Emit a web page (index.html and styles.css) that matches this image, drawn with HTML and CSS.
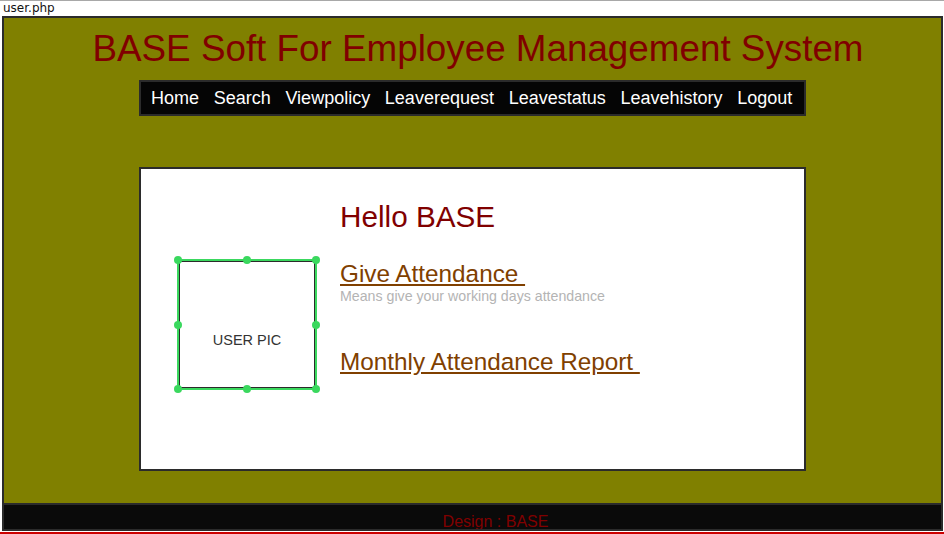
FILE: index.html
```html
<!DOCTYPE html>
<html>
<head>
<meta charset="utf-8">
<title>user.php</title>
<link rel="stylesheet" href="styles.css">
</head>
<body>
<div class="topstrip">user.php</div>
<div class="frame">
  <div class="main">
    <h1 class="title">BASE Soft For Employee Management System</h1>
    <nav class="nav">
      <a href="#">Home</a>
      <a href="#">Search</a>
      <a href="#">Viewpolicy</a>
      <a href="#">Leaverequest</a>
      <a href="#">Leavestatus</a>
      <a href="#">Leavehistory</a>
      <a href="#">Logout</a>
    </nav>
    <section class="card">
      <div class="pic">
        <span class="pic-label">USER PIC</span>
        <i class="h h-tl"></i><i class="h h-tm"></i><i class="h h-tr"></i>
        <i class="h h-ml"></i><i class="h h-mr"></i>
        <i class="h h-bl"></i><i class="h h-bm"></i><i class="h h-br"></i>
      </div>
      <div class="info">
        <h2 class="hello">Hello BASE</h2>
        <a class="biglink" href="#">Give Attendance&nbsp;</a>
        <p class="desc">Means give your working days attendance</p>
        <a class="biglink second" href="#">Monthly Attendance Report&nbsp;</a>
      </div>
    </section>
  </div>
  <footer class="footer">Design : BASE</footer>
</div>
<div class="redline"></div>
</body>
</html>
```
FILE: styles.css
```css
html, body {
  margin: 0;
  padding: 0;
  background: #ffffff;
  overflow: hidden;
}
body {
  width: 944px;
  height: 534px;
  font-family: "Liberation Sans", Arial, sans-serif;
}
.topstrip {
  height: 15px;
  border-top: 1px solid #a8a8a8;
  font-family: "DejaVu Sans", sans-serif;
  font-size: 12px;
  line-height: 14px;
  padding-left: 3px;
  color: #111;
}
.frame {
  margin-left: 2px;
  width: 937px;
  border: 2px solid #2b2b2b;
}
.main {
  background: #808000;
  height: 485px;
  border-bottom: 2px solid #2b2b2b;
  display: flex;
  flex-direction: column;
  align-items: center;
}
.title {
  margin: 0;
  padding: 12px 0 0 11px;
  height: 37px;
  font-weight: normal;
  font-size: 36.8px;
  line-height: 37px;
  color: #800000;
  white-space: nowrap;
}
.nav {
  margin-top: 13px;
  height: 32px;
  background: #050505;
  border: 2px solid #2b2b2b;
  display: flex;
  gap: 14.7px;
  padding-left: 10px;
  box-sizing: content-box;
  width: 653px;
}
.nav a {
  color: #ffffff;
  text-decoration: none;
  font-size: 18px;
  line-height: 32px;
}
.card {
  margin-top: 51px;
  width: 663px;
  height: 300px;
  background: #ffffff;
  border: 2px solid #2b2b2b;
  display: flex;
  align-items: flex-start;
}
.pic {
  position: relative;
  margin: 90px 0 0 36px;
  width: 136px;
  height: 127px;
  border: 2px solid #3ad85e;
  box-shadow: inset 0 0 0 1px #2b2b2b;
  display: flex;
  align-items: flex-end;
  justify-content: center;
  flex-shrink: 0;
}
.pic-label {
  font-size: 14.5px;
  line-height: 16px;
  color: #333333;
  margin-bottom: 40px;
}
.h {
  position: absolute;
  width: 8px;
  height: 8px;
  border-radius: 50%;
  background: #3ad85e;
}
.h-tl { left: -5px; top: -5px; }
.h-tm { left: 64px; top: -5px; }
.h-tr { right: -5px; top: -5px; }
.h-ml { left: -5px; top: 59.5px; }
.h-mr { right: -5px; top: 59.5px; }
.h-bl { left: -5px; bottom: -5px; }
.h-bm { left: 64px; bottom: -5px; }
.h-br { right: -5px; bottom: -5px; }
.info {
  margin: 31px 0 0 23px;
  display: flex;
  flex-direction: column;
  align-items: flex-start;
}
.hello {
  margin: 0;
  font-weight: normal;
  font-size: 29.7px;
  line-height: 34px;
  color: #800000;
}
.biglink {
  margin-top: 26px;
  font-size: 24.3px;
  line-height: 27px;
  color: #804000;
  text-decoration: underline;
  white-space: nowrap;
}
.biglink.second {
  margin-top: 44px;
}
.desc {
  margin: 1px 0 0 0;
  font-size: 14.2px;
  line-height: 16px;
  color: #b4b4b4;
}
.footer {
  height: 24px;
  background: #0a0a0a;
  color: #800000;
  font-size: 16px;
  line-height: 16px;
  box-sizing: border-box;
  text-align: center;
  overflow: hidden;
  padding: 9px 0 0 46px;
}
.redline {
  margin-top: 1px;
  height: 4px;
  background: #cc0000;
}
```
